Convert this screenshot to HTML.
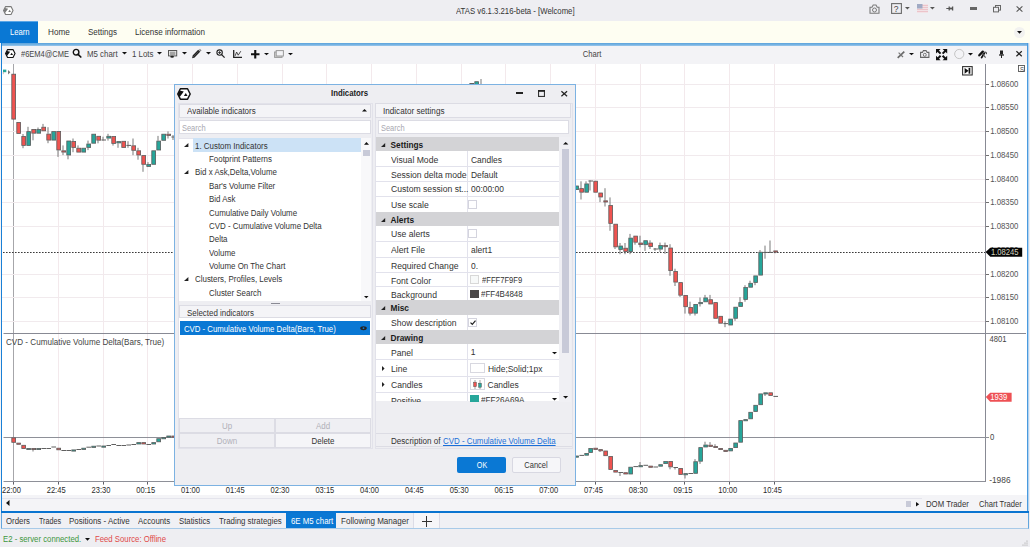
<!DOCTYPE html><html><head><meta charset="utf-8"><style>
*{margin:0;padding:0;box-sizing:border-box}
html,body{width:1030px;height:547px;overflow:hidden;background:#eeeef2;font-family:"Liberation Sans", sans-serif;position:relative}
.a{position:absolute}
.t{position:absolute;white-space:nowrap;line-height:1;font-family:"Liberation Sans", sans-serif}
svg{position:absolute;overflow:visible}
</style></head><body>
<div class="a" style="left:0px;top:0px;width:1030px;height:21px;background:#eeeef2;"></div>
<svg style="left:3.2px;top:5.8px" width="10.6" height="9.085714285714285" viewBox="0 0 14 12"><path d="M3.4 0.75 L10.6 0.75 L13.25 6 L10.6 11.25 L3.4 11.25 L0.75 6 Z" fill="#fff" stroke="#7a7a7a" stroke-width="1.5" stroke-linejoin="round"/><path d="M0.9 6 L2.7 2.6 L6.8 3.5 L3.3 8.3 L2.6 8.9 Z" fill="#7a7a7a"/><path d="M8.8 4.9 L10.6 8.0 L6.9 8.0 Z" fill="#7a7a7a"/></svg>
<div class="t" style="left:455.50px;top:7px;font-size:8.90px;color:#333;transform:scaleX(0.8740);transform-origin:left top;">ATAS v6.1.3.216-beta - [Welcome]</div>
<svg style="left:869px;top:4px" width="11" height="10" viewBox="0 0 11 10"><path d="M1 3.2 H3 L4.2 1 H7 L8.2 3.2 H10 V9.3 H1 Z" fill="none" stroke="#7a7a7a" stroke-width="1.1"/><circle cx="5.5" cy="6" r="2" fill="none" stroke="#7a7a7a" stroke-width="1"/></svg>
<svg style="left:891px;top:3px" width="11" height="11" viewBox="0 0 11 11"><rect x="0.6" y="0.6" width="9.8" height="9.8" fill="none" stroke="#6a6a6a" stroke-width="1.1"/></svg>
<div class="t" style="left:893.80px;top:5px;font-size:8.50px;color:#444;">?</div>
<svg style="left:905.0px;top:7.4px" width="4.8" height="2.6" viewBox="0 0 4.8 2.6"><path d="M0 0H4.8L2.4 2.6Z" fill="#555"/></svg>
<svg style="left:917px;top:4px" width="11" height="9" viewBox="0 0 11 9"><rect width="11" height="9" fill="#f2e2e6"/><rect y="1" width="11" height="1" fill="#ecc4ca"/><rect y="3" width="11" height="1" fill="#ecc4ca"/><rect y="5" width="11" height="1" fill="#ecc4ca"/><rect y="7" width="11" height="1" fill="#ecc4ca"/><rect width="5.5" height="4.5" fill="#a0aac4"/></svg>
<svg style="left:930.4px;top:7.4px" width="4.8" height="2.6" viewBox="0 0 4.8 2.6"><path d="M0 0H4.8L2.4 2.6Z" fill="#555"/></svg>
<svg style="left:946px;top:6px" width="8" height="5" viewBox="0 0 8 5"><path d="M0.3 2.5 H7" stroke="#555" stroke-width="1"/><path d="M3.2 0.6 V4.4 M6.6 0.4 V4.6" stroke="#555" stroke-width="1.3"/><rect x="3.2" y="1.6" width="3.4" height="1.8" fill="#555"/></svg>
<div class="a" style="left:970.2px;top:7.4px;width:7px;height:2.2px;background:#666;"></div>
<svg style="left:992.5px;top:5px" width="8" height="7" viewBox="0 0 8 7"><rect x="2.5" y="0.5" width="5" height="4.6" fill="none" stroke="#666" stroke-width="1"/><rect x="0.5" y="2.3" width="5" height="4.6" fill="#eeeef2" stroke="#666" stroke-width="1"/></svg>
<svg style="left:1015.5px;top:5.8px" width="7" height="6" viewBox="0 0 7 6"><path d="M0.6 0.3 L6.4 5.7 M6.4 0.3 L0.6 5.7" stroke="#555" stroke-width="1.1"/></svg>
<div class="a" style="left:0px;top:21px;width:1030px;height:22px;background:#fefef2;"></div>
<div class="a" style="left:0px;top:21px;width:38px;height:22px;background:#0a78d4;"></div>
<div class="a" style="left:0px;top:21px;width:38px;height:1px;background:#5aa6e6;"></div>
<div class="t" style="left:9.60px;top:28px;font-size:8.50px;color:#fff;transform:scaleX(0.9015);transform-origin:left top;">Learn</div>
<div class="t" style="left:47.60px;top:28px;font-size:8.50px;color:#333;transform:scaleX(0.9610);transform-origin:left top;">Home</div>
<div class="t" style="left:87.80px;top:28px;font-size:8.50px;color:#333;transform:scaleX(0.9408);transform-origin:left top;">Settings</div>
<div class="t" style="left:135.00px;top:28px;font-size:8.50px;color:#333;transform:scaleX(0.9497);transform-origin:left top;">License information</div>
<div class="a" style="left:1013.5px;top:26.5px;width:11px;height:11px;background:#f2f2f0;border-radius:50%"></div>
<svg style="left:1016.5px;top:31px" width="5" height="2.8" viewBox="0 0 5 2.8"><path d="M0 0H5L2.5 2.8Z" fill="#111"/></svg>
<div class="a" style="left:0px;top:43px;width:1030px;height:470px;background:#fff;"></div>
<div class="a" style="left:0px;top:43px;width:1px;height:470px;background:#f4f4f6;"></div>
<div class="a" style="left:1px;top:43px;width:1028px;height:1px;background:#64a8de;"></div>
<div class="a" style="left:1px;top:44px;width:1028px;height:1px;background:#74b2e2;"></div>
<div class="a" style="left:1px;top:45px;width:1028px;height:1px;background:#8ec0e8;"></div>
<div class="a" style="left:1px;top:43px;width:1px;height:470px;background:#1a80d6;"></div>
<div class="a" style="left:1027px;top:43px;width:1px;height:470px;background:#4a9ade;"></div>
<div class="a" style="left:1028px;top:43px;width:1px;height:470px;background:#b4d4f0;"></div>
<div class="a" style="left:1029px;top:43px;width:1px;height:470px;background:#eeeef2;"></div>
<div class="a" style="left:1px;top:511px;width:1028px;height:2px;background:#0a74d0;"></div>
<div class="a" style="left:2px;top:46px;width:1025px;height:18px;background:#f3f3f6;"></div>
<svg style="left:4.9px;top:49px" width="10.6" height="9.085714285714285" viewBox="0 0 14 12"><path d="M3.4 0.75 L10.6 0.75 L13.25 6 L10.6 11.25 L3.4 11.25 L0.75 6 Z" fill="#fff" stroke="#111" stroke-width="1.5" stroke-linejoin="round"/><path d="M0.9 6 L2.7 2.6 L6.8 3.5 L3.3 8.3 L2.6 8.9 Z" fill="#111"/><path d="M8.8 4.9 L10.6 8.0 L6.9 8.0 Z" fill="#111"/></svg>
<div class="t" style="left:21.00px;top:50px;font-size:8.50px;color:#444;transform:scaleX(0.8815);transform-origin:left top;">#6EM4@CME</div>
<svg style="left:72px;top:48px" width="10" height="10" viewBox="0 0 10 10"><circle cx="4.1" cy="4.2" r="2.8" fill="none" stroke="#111" stroke-width="1.4"/><path d="M6.1 6.3 L8.8 9" stroke="#111" stroke-width="1.7" stroke-linecap="round"/></svg>
<div class="t" style="left:86.60px;top:50px;font-size:8.50px;color:#444;transform:scaleX(0.9253);transform-origin:left top;">M5 chart</div>
<svg style="left:122.3px;top:52.2px" width="5" height="2.5" viewBox="0 0 5 2.5"><path d="M0 0H5L2.5 2.5Z" fill="#111"/></svg>
<div class="t" style="left:132.00px;top:50px;font-size:8.50px;color:#444;transform:scaleX(0.9282);transform-origin:left top;">1 Lots</div>
<svg style="left:157.2px;top:52.2px" width="5" height="2.5" viewBox="0 0 5 2.5"><path d="M0 0H5L2.5 2.5Z" fill="#111"/></svg>
<svg style="left:168px;top:50px" width="9" height="8" viewBox="0 0 9 8"><rect x="0.5" y="0.5" width="8.2" height="5.4" fill="#f0f0f0" stroke="#555" stroke-width="1"/><rect x="1.8" y="1.6" width="5.6" height="3.4" fill="#a4a4a4"/><ellipse cx="4.1" cy="6.7" rx="1.9" ry="1" fill="#222"/></svg>
<svg style="left:181.5px;top:52.2px" width="5" height="2.5" viewBox="0 0 5 2.5"><path d="M0 0H5L2.5 2.5Z" fill="#111"/></svg>
<svg style="left:192px;top:49px" width="9.5" height="9.5" viewBox="0 0 9.5 9.5"><path d="M1.6 7.4 L7.2 1.8" stroke="#222" stroke-width="2.8"/><path d="M0.1 9.2 L0.7 6.4 L2.8 8.5 Z" fill="#222"/><path d="M7.4 0.4 L9 2" stroke="#888" stroke-width="1.6"/><path d="M2.2 6.8 L6.6 2.4" stroke="#ddd" stroke-width="0.5" stroke-dasharray="0.6 0.9"/></svg>
<svg style="left:205.7px;top:52.2px" width="5" height="2.5" viewBox="0 0 5 2.5"><path d="M0 0H5L2.5 2.5Z" fill="#111"/></svg>
<svg style="left:216px;top:49px" width="9.5" height="9.5" viewBox="0 0 9.5 9.5"><circle cx="3.6" cy="3.6" r="2.7" fill="none" stroke="#222" stroke-width="1.1"/><path d="M3.6 2.2 V5 M2.2 3.6 H5" stroke="#222" stroke-width="0.9"/><path d="M5.6 5.6 L8.6 8.6" stroke="#222" stroke-width="1.3"/></svg>
<svg style="left:233px;top:50px" width="9" height="8" viewBox="0 0 9 8"><path d="M0.7 0 V7.3 H9" fill="none" stroke="#222" stroke-width="1.3"/><path d="M2.2 5.8 L3.6 2 L5.2 5.2 L7.8 1.2" fill="none" stroke="#333" stroke-width="0.9"/></svg>
<svg style="left:251px;top:49.5px" width="8.5" height="8.5" viewBox="0 0 8.5 8.5"><path d="M4.25 0 V8.5 M0 4.25 H8.5" stroke="#111" stroke-width="2.1"/></svg>
<svg style="left:264.1px;top:53px" width="5" height="2.2" viewBox="0 0 5 2.2"><path d="M0 0H5L2.5 2.2Z" fill="#111"/></svg>
<svg style="left:274px;top:50px" width="10" height="8" viewBox="0 0 10 8"><rect x="0.6" y="2" width="7.4" height="5.4" fill="#d8d8d8" stroke="#999" stroke-width="1"/><rect x="2.2" y="0.6" width="7.2" height="5.4" fill="#f3f3f6" stroke="#999" stroke-width="1"/></svg>
<svg style="left:288.2px;top:53px" width="5" height="2.2" viewBox="0 0 5 2.2"><path d="M0 0H5L2.5 2.2Z" fill="#111"/></svg>
<div class="t" style="left:592.30px;top:50px;font-size:8.50px;color:#444;transform:translateX(-50%) scaleX(0.8997);transform-origin:center top;">Chart</div>
<svg style="left:896.5px;top:50.5px" width="8" height="7.5" viewBox="0 0 8 7.5"><path d="M0.7 6.8 L7.3 0.6" stroke="#6a6a6a" stroke-width="1.7"/><path d="M1.6 1.6 L6 6" stroke="#777" stroke-width="1.2"/></svg>
<svg style="left:909.4px;top:52.9px" width="5" height="2.3" viewBox="0 0 5 2.3"><path d="M0 0H5L2.5 2.3Z" fill="#111"/></svg>
<svg style="left:920px;top:50px" width="9.5" height="8" viewBox="0 0 9.5 8"><path d="M0.6 2.4 H2.4 L3.4 0.6 H6.1 L7.1 2.4 H8.9 V7.4 H0.6 Z" fill="none" stroke="#666" stroke-width="1.1"/><circle cx="4.75" cy="4.8" r="1.5" fill="none" stroke="#666" stroke-width="0.9"/></svg>
<svg style="left:935.9px;top:48.6px" width="11.2" height="11.3" viewBox="0 0 11.2 11.3"><path d="M1.2 1.2 L4.6 4.6 M10 1.2 L6.6 4.6 M1.2 10.1 L4.6 6.7 M10 10.1 L6.6 6.7" stroke="#111" stroke-width="2"/><path d="M0 0 H4.6 L0 4.6 Z M11.2 0 H6.6 L11.2 4.6 Z M0 11.3 H4.6 L0 6.7 Z M11.2 11.3 H6.6 L11.2 6.7 Z" fill="#111"/></svg>
<svg style="left:953.5px;top:49px" width="10.5" height="10" viewBox="0 0 10.5 10"><circle cx="5.25" cy="5" r="4.6" fill="none" stroke="#c0c0c0" stroke-width="0.9"/></svg>
<svg style="left:967.9px;top:53px" width="5" height="2.6" viewBox="0 0 5 2.6"><path d="M0 0H5L2.5 2.6Z" fill="#111"/></svg>
<svg style="left:978px;top:50px" width="10" height="9" viewBox="0 0 10 9"><path d="M1.3 5.3 L4.8 1.6" stroke="#111" stroke-width="2.3" stroke-linecap="round"/><path d="M6.3 3.2 L3.6 7.6" stroke="#111" stroke-width="1.8" stroke-linecap="round"/><path d="M4.6 3.8 L7.6 7.6" stroke="#555" stroke-width="1.1"/><path d="M6.2 2.2 Q8.9 1.6 8.4 4.2" fill="none" stroke="#444" stroke-width="1.1"/></svg>
<svg style="left:999px;top:50px" width="5" height="8" viewBox="0 0 5 8"><path d="M1 0.5 H4 V4.5 H1 Z" fill="#222"/><path d="M0 5 H5" stroke="#222" stroke-width="1.2"/><path d="M2.5 5 V8" stroke="#222" stroke-width="1"/></svg>
<svg style="left:1015.6px;top:51px" width="6.2" height="5.6" viewBox="0 0 6.2 5.6"><path d="M0.4 0.3 L5.8 5.3 M5.8 0.3 L0.4 5.3" stroke="#222" stroke-width="1.2"/></svg>
<div class="a" style="left:2px;top:495px;width:1025px;height:16px;background:#f4f4f7;"></div>
<div class="a" style="left:2px;top:497.5px;width:920px;height:1px;background:#e4e4ec;"></div>
<svg style="left:6px;top:500px" width="4" height="6" viewBox="0 0 4 6"><path d="M3.5 0 V6 L0 3 Z" fill="#111"/></svg>
<div class="a" style="left:905.6px;top:501px;width:5.4px;height:6.4px;background:#c8cad8;"></div>
<svg style="left:915.5px;top:501.8px" width="3.2" height="4.4" viewBox="0 0 3.2 4.4"><path d="M0 0 V4.4 L3.2 2.2 Z" fill="#111"/></svg>
<div class="t" style="left:926.00px;top:500px;font-size:8.50px;color:#333;transform:scaleX(0.9152);transform-origin:left top;">DOM Trader</div>
<div class="t" style="left:979.00px;top:500px;font-size:8.50px;color:#333;transform:scaleX(0.8969);transform-origin:left top;">Chart Trader</div>
<svg width="1030" height="547" style="position:absolute;left:0;top:0">
<line x1="13.5" y1="64" x2="13.5" y2="481" stroke="#a6a6aa" stroke-width="1"/>
<line x1="13.5" y1="481" x2="13.5" y2="484.6" stroke="#606068" stroke-width="1"/>
<line x1="58.5" y1="64" x2="58.5" y2="481" stroke="#f3e9ec" stroke-width="1"/>
<line x1="58.5" y1="481" x2="58.5" y2="484.6" stroke="#606068" stroke-width="1"/>
<line x1="103.5" y1="64" x2="103.5" y2="481" stroke="#f3e9ec" stroke-width="1"/>
<line x1="103.5" y1="481" x2="103.5" y2="484.6" stroke="#606068" stroke-width="1"/>
<line x1="147.5" y1="64" x2="147.5" y2="481" stroke="#f3e9ec" stroke-width="1"/>
<line x1="147.5" y1="481" x2="147.5" y2="484.6" stroke="#606068" stroke-width="1"/>
<line x1="192.5" y1="64" x2="192.5" y2="481" stroke="#f3e9ec" stroke-width="1"/>
<line x1="192.5" y1="481" x2="192.5" y2="484.6" stroke="#606068" stroke-width="1"/>
<line x1="237.5" y1="64" x2="237.5" y2="481" stroke="#f3e9ec" stroke-width="1"/>
<line x1="237.5" y1="481" x2="237.5" y2="484.6" stroke="#606068" stroke-width="1"/>
<line x1="282.5" y1="64" x2="282.5" y2="481" stroke="#f3e9ec" stroke-width="1"/>
<line x1="282.5" y1="481" x2="282.5" y2="484.6" stroke="#606068" stroke-width="1"/>
<line x1="326.5" y1="64" x2="326.5" y2="481" stroke="#f3e9ec" stroke-width="1"/>
<line x1="326.5" y1="481" x2="326.5" y2="484.6" stroke="#606068" stroke-width="1"/>
<line x1="371.5" y1="64" x2="371.5" y2="481" stroke="#f3e9ec" stroke-width="1"/>
<line x1="371.5" y1="481" x2="371.5" y2="484.6" stroke="#606068" stroke-width="1"/>
<line x1="416.5" y1="64" x2="416.5" y2="481" stroke="#f3e9ec" stroke-width="1"/>
<line x1="416.5" y1="481" x2="416.5" y2="484.6" stroke="#606068" stroke-width="1"/>
<line x1="461.5" y1="64" x2="461.5" y2="481" stroke="#f3e9ec" stroke-width="1"/>
<line x1="461.5" y1="481" x2="461.5" y2="484.6" stroke="#606068" stroke-width="1"/>
<line x1="505.5" y1="64" x2="505.5" y2="481" stroke="#f3e9ec" stroke-width="1"/>
<line x1="505.5" y1="481" x2="505.5" y2="484.6" stroke="#606068" stroke-width="1"/>
<line x1="550.5" y1="64" x2="550.5" y2="481" stroke="#f3e9ec" stroke-width="1"/>
<line x1="550.5" y1="481" x2="550.5" y2="484.6" stroke="#606068" stroke-width="1"/>
<line x1="595.5" y1="64" x2="595.5" y2="481" stroke="#f3e9ec" stroke-width="1"/>
<line x1="595.5" y1="481" x2="595.5" y2="484.6" stroke="#606068" stroke-width="1"/>
<line x1="640.5" y1="64" x2="640.5" y2="481" stroke="#f3e9ec" stroke-width="1"/>
<line x1="640.5" y1="481" x2="640.5" y2="484.6" stroke="#606068" stroke-width="1"/>
<line x1="684.5" y1="64" x2="684.5" y2="481" stroke="#f3e9ec" stroke-width="1"/>
<line x1="684.5" y1="481" x2="684.5" y2="484.6" stroke="#606068" stroke-width="1"/>
<line x1="729.5" y1="64" x2="729.5" y2="481" stroke="#f3e9ec" stroke-width="1"/>
<line x1="729.5" y1="481" x2="729.5" y2="484.6" stroke="#606068" stroke-width="1"/>
<line x1="774.5" y1="64" x2="774.5" y2="481" stroke="#f3e9ec" stroke-width="1"/>
<line x1="774.5" y1="481" x2="774.5" y2="484.6" stroke="#606068" stroke-width="1"/>
<line x1="2" y1="84.5" x2="985" y2="84.5" stroke="#f1eaed" stroke-width="1"/>
<line x1="985" y1="84.5" x2="989" y2="84.5" stroke="#707070" stroke-width="1"/>
<line x1="2" y1="107.5" x2="985" y2="107.5" stroke="#f1eaed" stroke-width="1"/>
<line x1="985" y1="107.5" x2="989" y2="107.5" stroke="#707070" stroke-width="1"/>
<line x1="2" y1="131.5" x2="985" y2="131.5" stroke="#f1eaed" stroke-width="1"/>
<line x1="985" y1="131.5" x2="989" y2="131.5" stroke="#707070" stroke-width="1"/>
<line x1="2" y1="155.5" x2="985" y2="155.5" stroke="#f1eaed" stroke-width="1"/>
<line x1="985" y1="155.5" x2="989" y2="155.5" stroke="#707070" stroke-width="1"/>
<line x1="2" y1="179.5" x2="985" y2="179.5" stroke="#f1eaed" stroke-width="1"/>
<line x1="985" y1="179.5" x2="989" y2="179.5" stroke="#707070" stroke-width="1"/>
<line x1="2" y1="202.5" x2="985" y2="202.5" stroke="#f1eaed" stroke-width="1"/>
<line x1="985" y1="202.5" x2="989" y2="202.5" stroke="#707070" stroke-width="1"/>
<line x1="2" y1="226.5" x2="985" y2="226.5" stroke="#f1eaed" stroke-width="1"/>
<line x1="985" y1="226.5" x2="989" y2="226.5" stroke="#707070" stroke-width="1"/>
<line x1="2" y1="274.5" x2="985" y2="274.5" stroke="#f1eaed" stroke-width="1"/>
<line x1="985" y1="274.5" x2="989" y2="274.5" stroke="#707070" stroke-width="1"/>
<line x1="2" y1="297.5" x2="985" y2="297.5" stroke="#f1eaed" stroke-width="1"/>
<line x1="985" y1="297.5" x2="989" y2="297.5" stroke="#707070" stroke-width="1"/>
<line x1="2" y1="321.5" x2="985" y2="321.5" stroke="#f1eaed" stroke-width="1"/>
<line x1="985" y1="321.5" x2="989" y2="321.5" stroke="#707070" stroke-width="1"/>
<line x1="3" y1="252.5" x2="985" y2="252.5" stroke="#3a3a3a" stroke-width="1" stroke-dasharray="1.6 1.4"/>
<line x1="3.5" y1="333.5" x2="1026" y2="333.5" stroke="#888a94" stroke-width="1"/>
<line x1="985.5" y1="64" x2="985.5" y2="482" stroke="#888a94" stroke-width="1"/>
<line x1="3.5" y1="437.5" x2="989" y2="437.5" stroke="#8e9098" stroke-width="1"/>
<line x1="3.5" y1="481.5" x2="985.5" y2="481.5" stroke="#8e9098" stroke-width="1"/>
<rect x="11.8" y="74.2" width="3.8" height="44.9" fill="#ef5350" stroke="#5b5b5b" stroke-width="0.8"/>
<rect x="16.8" y="122.4" width="3.8" height="11.1" fill="#ef5350" stroke="#5b5b5b" stroke-width="0.8"/>
<rect x="22.5" y="134.0" width="1" height="2.0" fill="#7a7a7a"/>
<rect x="22.5" y="145.8" width="1" height="2.4" fill="#7a7a7a"/>
<rect x="21.8" y="136.4" width="3.8" height="9.0" fill="#ef5350" stroke="#5b5b5b" stroke-width="0.8"/>
<rect x="27.5" y="126.8" width="1" height="4.4" fill="#7a7a7a"/>
<rect x="26.8" y="131.6" width="3.8" height="13.8" fill="#26a69a" stroke="#5b5b5b" stroke-width="0.8"/>
<rect x="32.5" y="133.6" width="1" height="6.7" fill="#7a7a7a"/>
<rect x="31.8" y="129.4" width="3.8" height="3.8" fill="#ef5350" stroke="#5b5b5b" stroke-width="0.8"/>
<rect x="37.5" y="127.5" width="1" height="1.5" fill="#7a7a7a"/>
<rect x="36.8" y="129.4" width="3.8" height="3.8" fill="#26a69a" stroke="#5b5b5b" stroke-width="0.8"/>
<rect x="42.5" y="123.9" width="1" height="2.9" fill="#7a7a7a"/>
<rect x="41.8" y="127.2" width="3.8" height="3.6" fill="#ef5350" stroke="#5b5b5b" stroke-width="0.8"/>
<rect x="47.5" y="127.2" width="1" height="6.5" fill="#7a7a7a"/>
<rect x="47.5" y="140.5" width="1" height="2.7" fill="#7a7a7a"/>
<rect x="46.8" y="134.1" width="3.8" height="6.0" fill="#ef5350" stroke="#5b5b5b" stroke-width="0.8"/>
<rect x="51.8" y="131.6" width="3.8" height="8.5" fill="#26a69a" stroke="#5b5b5b" stroke-width="0.8"/>
<rect x="57.5" y="150.4" width="1" height="6.5" fill="#7a7a7a"/>
<rect x="56.8" y="131.5" width="3.8" height="18.5" fill="#ef5350" stroke="#5b5b5b" stroke-width="0.8"/>
<rect x="62.5" y="145.4" width="1" height="5.0" fill="#7a7a7a"/>
<rect x="62.5" y="152.5" width="1" height="2.6" fill="#7a7a7a"/>
<rect x="61.8" y="150.8" width="3.8" height="1.3" fill="#ef5350" stroke="#5b5b5b" stroke-width="0.8"/>
<rect x="67.5" y="155.4" width="1" height="3.9" fill="#7a7a7a"/>
<rect x="66.8" y="141.0" width="3.8" height="14.0" fill="#26a69a" stroke="#5b5b5b" stroke-width="0.8"/>
<rect x="72.5" y="138.5" width="1" height="2.6" fill="#7a7a7a"/>
<rect x="72.5" y="147.8" width="1" height="4.4" fill="#7a7a7a"/>
<rect x="71.8" y="141.5" width="3.8" height="5.9" fill="#ef5350" stroke="#5b5b5b" stroke-width="0.8"/>
<rect x="77.5" y="145.4" width="1" height="2.4" fill="#7a7a7a"/>
<rect x="76.8" y="148.2" width="3.8" height="3.9" fill="#ef5350" stroke="#5b5b5b" stroke-width="0.8"/>
<rect x="81.8" y="148.2" width="3.8" height="3.9" fill="#26a69a" stroke="#5b5b5b" stroke-width="0.8"/>
<rect x="87.5" y="140.6" width="1" height="3.0" fill="#7a7a7a"/>
<rect x="87.5" y="147.8" width="1" height="2.3" fill="#7a7a7a"/>
<rect x="86.8" y="144.0" width="3.8" height="3.4" fill="#26a69a" stroke="#5b5b5b" stroke-width="0.8"/>
<rect x="91.8" y="134.2" width="3.8" height="9.0" fill="#26a69a" stroke="#5b5b5b" stroke-width="0.8"/>
<rect x="97.5" y="140.6" width="1" height="2.7" fill="#7a7a7a"/>
<rect x="96.8" y="136.3" width="3.8" height="3.9" fill="#ef5350" stroke="#5b5b5b" stroke-width="0.8"/>
<rect x="102.5" y="136.7" width="1" height="3.3" fill="#7a7a7a"/>
<rect x="102.5" y="140.0" width="1" height="0.6" fill="#7a7a7a"/>
<rect x="101.4" y="139.5" width="4.6" height="1" fill="#606060"/>
<rect x="107.5" y="133.8" width="1" height="2.1" fill="#7a7a7a"/>
<rect x="107.5" y="138.5" width="1" height="2.1" fill="#7a7a7a"/>
<rect x="106.8" y="136.3" width="3.8" height="1.8" fill="#26a69a" stroke="#5b5b5b" stroke-width="0.8"/>
<rect x="112.5" y="143.8" width="1" height="1.8" fill="#7a7a7a"/>
<rect x="111.8" y="136.5" width="3.8" height="6.9" fill="#ef5350" stroke="#5b5b5b" stroke-width="0.8"/>
<rect x="117.5" y="143.3" width="1" height="4.5" fill="#7a7a7a"/>
<rect x="116.8" y="141.6" width="3.8" height="1.3" fill="#26a69a" stroke="#5b5b5b" stroke-width="0.8"/>
<rect x="121.8" y="141.3" width="3.8" height="6.1" fill="#ef5350" stroke="#5b5b5b" stroke-width="0.8"/>
<rect x="127.5" y="141.2" width="1" height="4.2" fill="#7a7a7a"/>
<rect x="127.5" y="145.4" width="1" height="2.4" fill="#7a7a7a"/>
<rect x="126.4" y="144.9" width="4.6" height="1" fill="#606060"/>
<rect x="132.5" y="138.5" width="1" height="6.9" fill="#7a7a7a"/>
<rect x="132.5" y="150.7" width="1" height="4.5" fill="#7a7a7a"/>
<rect x="131.8" y="145.8" width="3.8" height="4.5" fill="#ef5350" stroke="#5b5b5b" stroke-width="0.8"/>
<rect x="137.5" y="147.8" width="1" height="2.6" fill="#7a7a7a"/>
<rect x="137.5" y="155.4" width="1" height="4.3" fill="#7a7a7a"/>
<rect x="136.8" y="150.8" width="3.8" height="4.2" fill="#ef5350" stroke="#5b5b5b" stroke-width="0.8"/>
<rect x="142.5" y="164.7" width="1" height="7.1" fill="#7a7a7a"/>
<rect x="141.8" y="155.6" width="3.8" height="8.7" fill="#ef5350" stroke="#5b5b5b" stroke-width="0.8"/>
<rect x="147.5" y="162.1" width="1" height="2.0" fill="#7a7a7a"/>
<rect x="146.8" y="164.5" width="3.8" height="1.9" fill="#26a69a" stroke="#5b5b5b" stroke-width="0.8"/>
<rect x="151.8" y="150.8" width="3.8" height="13.5" fill="#26a69a" stroke="#5b5b5b" stroke-width="0.8"/>
<rect x="157.5" y="135.9" width="1" height="4.8" fill="#7a7a7a"/>
<rect x="156.8" y="141.1" width="3.8" height="8.9" fill="#26a69a" stroke="#5b5b5b" stroke-width="0.8"/>
<rect x="161.8" y="134.2" width="3.8" height="6.1" fill="#26a69a" stroke="#5b5b5b" stroke-width="0.8"/>
<rect x="167.5" y="131.4" width="1" height="2.4" fill="#7a7a7a"/>
<rect x="167.5" y="135.9" width="1" height="2.6" fill="#7a7a7a"/>
<rect x="166.8" y="134.2" width="3.8" height="1.3" fill="#ef5350" stroke="#5b5b5b" stroke-width="0.8"/>
<rect x="172.5" y="135.0" width="1" height="2.0" fill="#7a7a7a"/>
<rect x="172.5" y="137.0" width="1" height="3.0" fill="#7a7a7a"/>
<rect x="171.4" y="136.5" width="4.6" height="1" fill="#606060"/>
<rect x="469.4" y="83.0" width="4.6" height="1" fill="#606060"/>
<rect x="474.8" y="81.7" width="3.8" height="7.9" fill="#26a69a" stroke="#5b5b5b" stroke-width="0.8"/>
<rect x="480.5" y="79.0" width="1" height="7.0" fill="#7a7a7a"/>
<rect x="480.5" y="86.0" width="1" height="4.0" fill="#7a7a7a"/>
<rect x="479.4" y="85.5" width="4.6" height="1" fill="#606060"/>
<rect x="574.8" y="186.0" width="3.8" height="3.6" fill="#26a69a" stroke="#5b5b5b" stroke-width="0.8"/>
<rect x="580.5" y="181.3" width="1" height="6.9" fill="#7a7a7a"/>
<rect x="580.5" y="192.6" width="1" height="6.9" fill="#7a7a7a"/>
<rect x="579.8" y="188.6" width="3.8" height="3.6" fill="#ef5350" stroke="#5b5b5b" stroke-width="0.8"/>
<rect x="585.5" y="181.3" width="1" height="2.2" fill="#7a7a7a"/>
<rect x="584.8" y="183.9" width="3.8" height="8.3" fill="#26a69a" stroke="#5b5b5b" stroke-width="0.8"/>
<rect x="589.5" y="180.4" width="1" height="0.6" fill="#7a7a7a"/>
<rect x="589.5" y="181.0" width="1" height="9.5" fill="#7a7a7a"/>
<rect x="588.4" y="180.5" width="4.6" height="1" fill="#606060"/>
<rect x="593.8" y="181.2" width="3.8" height="11.0" fill="#ef5350" stroke="#5b5b5b" stroke-width="0.8"/>
<rect x="599.5" y="197.4" width="1" height="4.7" fill="#7a7a7a"/>
<rect x="598.8" y="193.0" width="3.8" height="4.0" fill="#ef5350" stroke="#5b5b5b" stroke-width="0.8"/>
<rect x="604.5" y="188.2" width="1" height="12.2" fill="#7a7a7a"/>
<rect x="604.5" y="202.1" width="1" height="4.4" fill="#7a7a7a"/>
<rect x="603.8" y="200.8" width="3.8" height="1.2" fill="#ef5350" stroke="#5b5b5b" stroke-width="0.8"/>
<rect x="609.5" y="197.4" width="1" height="7.7" fill="#7a7a7a"/>
<rect x="609.5" y="223.8" width="1" height="7.0" fill="#7a7a7a"/>
<rect x="608.8" y="205.5" width="3.8" height="17.9" fill="#ef5350" stroke="#5b5b5b" stroke-width="0.8"/>
<rect x="614.5" y="247.3" width="1" height="1.7" fill="#7a7a7a"/>
<rect x="613.8" y="224.2" width="3.8" height="22.7" fill="#ef5350" stroke="#5b5b5b" stroke-width="0.8"/>
<rect x="619.5" y="243.0" width="1" height="2.6" fill="#7a7a7a"/>
<rect x="619.5" y="249.9" width="1" height="4.3" fill="#7a7a7a"/>
<rect x="618.8" y="246.0" width="3.8" height="3.5" fill="#26a69a" stroke="#5b5b5b" stroke-width="0.8"/>
<rect x="624.5" y="243.0" width="1" height="4.8" fill="#7a7a7a"/>
<rect x="624.5" y="252.0" width="1" height="2.2" fill="#7a7a7a"/>
<rect x="623.8" y="248.2" width="3.8" height="3.4" fill="#ef5350" stroke="#5b5b5b" stroke-width="0.8"/>
<rect x="629.5" y="233.9" width="1" height="3.8" fill="#7a7a7a"/>
<rect x="629.5" y="252.0" width="1" height="2.2" fill="#7a7a7a"/>
<rect x="628.8" y="238.1" width="3.8" height="13.5" fill="#26a69a" stroke="#5b5b5b" stroke-width="0.8"/>
<rect x="634.5" y="242.6" width="1" height="2.1" fill="#7a7a7a"/>
<rect x="633.8" y="236.1" width="3.8" height="6.1" fill="#ef5350" stroke="#5b5b5b" stroke-width="0.8"/>
<rect x="639.5" y="235.7" width="1" height="6.9" fill="#7a7a7a"/>
<rect x="639.5" y="245.0" width="1" height="2.3" fill="#7a7a7a"/>
<rect x="638.8" y="243.0" width="3.8" height="1.6" fill="#ef5350" stroke="#5b5b5b" stroke-width="0.8"/>
<rect x="644.5" y="245.1" width="1" height="5.8" fill="#7a7a7a"/>
<rect x="643.8" y="240.7" width="3.8" height="4.0" fill="#26a69a" stroke="#5b5b5b" stroke-width="0.8"/>
<rect x="649.5" y="240.3" width="1" height="2.3" fill="#7a7a7a"/>
<rect x="649.5" y="247.0" width="1" height="2.0" fill="#7a7a7a"/>
<rect x="648.8" y="243.0" width="3.8" height="3.6" fill="#ef5350" stroke="#5b5b5b" stroke-width="0.8"/>
<rect x="654.5" y="248.0" width="1" height="1.0" fill="#7a7a7a"/>
<rect x="654.5" y="249.0" width="1" height="1.9" fill="#7a7a7a"/>
<rect x="653.4" y="248.5" width="4.6" height="1" fill="#606060"/>
<rect x="659.5" y="242.6" width="1" height="2.5" fill="#7a7a7a"/>
<rect x="659.5" y="249.5" width="1" height="2.4" fill="#7a7a7a"/>
<rect x="658.8" y="245.5" width="3.8" height="3.6" fill="#26a69a" stroke="#5b5b5b" stroke-width="0.8"/>
<rect x="664.5" y="242.6" width="1" height="2.5" fill="#7a7a7a"/>
<rect x="664.5" y="247.0" width="1" height="6.8" fill="#7a7a7a"/>
<rect x="663.8" y="245.5" width="3.8" height="1.2" fill="#ef5350" stroke="#5b5b5b" stroke-width="0.8"/>
<rect x="669.5" y="244.2" width="1" height="3.4" fill="#7a7a7a"/>
<rect x="669.5" y="271.0" width="1" height="4.8" fill="#7a7a7a"/>
<rect x="668.8" y="248.0" width="3.8" height="22.6" fill="#ef5350" stroke="#5b5b5b" stroke-width="0.8"/>
<rect x="674.5" y="268.7" width="1" height="2.3" fill="#7a7a7a"/>
<rect x="674.5" y="282.5" width="1" height="3.5" fill="#7a7a7a"/>
<rect x="673.8" y="271.4" width="3.8" height="10.7" fill="#ef5350" stroke="#5b5b5b" stroke-width="0.8"/>
<rect x="679.5" y="295.6" width="1" height="1.3" fill="#7a7a7a"/>
<rect x="678.8" y="282.6" width="3.8" height="12.6" fill="#ef5350" stroke="#5b5b5b" stroke-width="0.8"/>
<rect x="684.5" y="307.1" width="1" height="6.5" fill="#7a7a7a"/>
<rect x="683.8" y="295.4" width="3.8" height="11.3" fill="#ef5350" stroke="#5b5b5b" stroke-width="0.8"/>
<rect x="689.5" y="301.7" width="1" height="5.4" fill="#7a7a7a"/>
<rect x="689.5" y="313.6" width="1" height="1.9" fill="#7a7a7a"/>
<rect x="688.8" y="307.5" width="3.8" height="5.7" fill="#ef5350" stroke="#5b5b5b" stroke-width="0.8"/>
<rect x="694.5" y="313.6" width="1" height="1.9" fill="#7a7a7a"/>
<rect x="693.8" y="304.4" width="3.8" height="8.8" fill="#26a69a" stroke="#5b5b5b" stroke-width="0.8"/>
<rect x="699.5" y="297.5" width="1" height="4.6" fill="#7a7a7a"/>
<rect x="699.5" y="304.0" width="1" height="2.5" fill="#7a7a7a"/>
<rect x="698.8" y="302.5" width="3.8" height="1.2" fill="#26a69a" stroke="#5b5b5b" stroke-width="0.8"/>
<rect x="704.5" y="294.9" width="1" height="2.6" fill="#7a7a7a"/>
<rect x="703.8" y="297.9" width="3.8" height="3.9" fill="#26a69a" stroke="#5b5b5b" stroke-width="0.8"/>
<rect x="709.5" y="294.9" width="1" height="4.4" fill="#7a7a7a"/>
<rect x="708.8" y="299.7" width="3.8" height="4.3" fill="#ef5350" stroke="#5b5b5b" stroke-width="0.8"/>
<rect x="713.8" y="302.6" width="3.8" height="15.7" fill="#ef5350" stroke="#5b5b5b" stroke-width="0.8"/>
<rect x="718.8" y="316.3" width="3.8" height="6.9" fill="#ef5350" stroke="#5b5b5b" stroke-width="0.8"/>
<rect x="724.5" y="321.2" width="1" height="2.4" fill="#7a7a7a"/>
<rect x="724.5" y="323.6" width="1" height="3.6" fill="#7a7a7a"/>
<rect x="723.4" y="323.1" width="4.6" height="1" fill="#606060"/>
<rect x="728.8" y="319.1" width="3.8" height="5.9" fill="#26a69a" stroke="#5b5b5b" stroke-width="0.8"/>
<rect x="734.5" y="318.7" width="1" height="2.1" fill="#7a7a7a"/>
<rect x="733.8" y="307.2" width="3.8" height="11.1" fill="#26a69a" stroke="#5b5b5b" stroke-width="0.8"/>
<rect x="739.5" y="297.1" width="1" height="5.1" fill="#7a7a7a"/>
<rect x="738.8" y="302.6" width="3.8" height="3.8" fill="#26a69a" stroke="#5b5b5b" stroke-width="0.8"/>
<rect x="744.5" y="285.2" width="1" height="1.9" fill="#7a7a7a"/>
<rect x="744.5" y="299.8" width="1" height="1.9" fill="#7a7a7a"/>
<rect x="743.8" y="287.5" width="3.8" height="11.9" fill="#26a69a" stroke="#5b5b5b" stroke-width="0.8"/>
<rect x="749.5" y="280.7" width="1" height="2.2" fill="#7a7a7a"/>
<rect x="748.8" y="283.3" width="3.8" height="3.9" fill="#26a69a" stroke="#5b5b5b" stroke-width="0.8"/>
<rect x="754.5" y="282.9" width="1" height="2.3" fill="#7a7a7a"/>
<rect x="753.8" y="275.9" width="3.8" height="6.6" fill="#26a69a" stroke="#5b5b5b" stroke-width="0.8"/>
<rect x="759.5" y="250.0" width="1" height="1.8" fill="#7a7a7a"/>
<rect x="758.8" y="252.2" width="3.8" height="22.9" fill="#26a69a" stroke="#5b5b5b" stroke-width="0.8"/>
<rect x="764.5" y="245.6" width="1" height="6.8" fill="#7a7a7a"/>
<rect x="764.5" y="252.4" width="1" height="6.3" fill="#7a7a7a"/>
<rect x="763.4" y="251.9" width="4.6" height="1" fill="#606060"/>
<rect x="769.5" y="240.5" width="1" height="11.9" fill="#7a7a7a"/>
<rect x="769.5" y="252.4" width="1" height="0.0" fill="#7a7a7a"/>
<rect x="768.4" y="251.9" width="4.6" height="1" fill="#606060"/>
<rect x="774.5" y="252.4" width="1" height="0.9" fill="#7a7a7a"/>
<rect x="773.8" y="250.9" width="3.8" height="1.2" fill="#ef5350" stroke="#5b5b5b" stroke-width="0.8"/>
<rect x="11.8" y="437.9" width="3.8" height="4.4" fill="#ef5350" stroke="#5b5b5b" stroke-width="0.8"/>
<rect x="16.8" y="443.1" width="3.8" height="1.2" fill="#ef5350" stroke="#5b5b5b" stroke-width="0.8"/>
<rect x="21.8" y="445.3" width="3.8" height="3.3" fill="#ef5350" stroke="#5b5b5b" stroke-width="0.8"/>
<rect x="26.8" y="448.4" width="3.8" height="1.2" fill="#26a69a" stroke="#5b5b5b" stroke-width="0.8"/>
<rect x="32.5" y="449.0" width="1" height="2.5" fill="#7a7a7a"/>
<rect x="31.8" y="448.4" width="3.8" height="1.2" fill="#ef5350" stroke="#5b5b5b" stroke-width="0.8"/>
<rect x="36.8" y="448.4" width="3.8" height="1.2" fill="#26a69a" stroke="#5b5b5b" stroke-width="0.8"/>
<rect x="41.4" y="448.0" width="4.6" height="1" fill="#606060"/>
<rect x="46.4" y="448.0" width="4.6" height="1" fill="#606060"/>
<rect x="51.4" y="446.5" width="4.6" height="1" fill="#606060"/>
<rect x="56.8" y="448.2" width="3.8" height="1.6" fill="#ef5350" stroke="#5b5b5b" stroke-width="0.8"/>
<rect x="61.4" y="450.0" width="4.6" height="1" fill="#606060"/>
<rect x="66.4" y="450.0" width="4.6" height="1" fill="#606060"/>
<rect x="71.8" y="449.9" width="3.8" height="1.2" fill="#26a69a" stroke="#5b5b5b" stroke-width="0.8"/>
<rect x="76.4" y="449.0" width="4.6" height="1" fill="#606060"/>
<rect x="81.8" y="448.2" width="3.8" height="1.2" fill="#26a69a" stroke="#5b5b5b" stroke-width="0.8"/>
<rect x="86.4" y="446.7" width="4.6" height="1" fill="#606060"/>
<rect x="91.8" y="446.2" width="3.8" height="1.2" fill="#26a69a" stroke="#5b5b5b" stroke-width="0.8"/>
<rect x="96.4" y="445.5" width="4.6" height="1" fill="#606060"/>
<rect x="101.8" y="446.0" width="3.8" height="1.2" fill="#26a69a" stroke="#5b5b5b" stroke-width="0.8"/>
<rect x="106.4" y="445.0" width="4.6" height="1" fill="#606060"/>
<rect x="111.4" y="444.0" width="4.6" height="1" fill="#606060"/>
<rect x="116.4" y="445.0" width="4.6" height="1" fill="#606060"/>
<rect x="121.4" y="445.0" width="4.6" height="1" fill="#606060"/>
<rect x="126.4" y="444.5" width="4.6" height="1" fill="#606060"/>
<rect x="131.4" y="444.0" width="4.6" height="1" fill="#606060"/>
<rect x="136.8" y="442.6" width="3.8" height="1.4" fill="#26a69a" stroke="#5b5b5b" stroke-width="0.8"/>
<rect x="141.8" y="442.6" width="3.8" height="1.4" fill="#ef5350" stroke="#5b5b5b" stroke-width="0.8"/>
<rect x="146.4" y="444.0" width="4.6" height="1" fill="#606060"/>
<rect x="151.8" y="442.6" width="3.8" height="1.4" fill="#26a69a" stroke="#5b5b5b" stroke-width="0.8"/>
<rect x="156.8" y="438.7" width="3.8" height="3.1" fill="#26a69a" stroke="#5b5b5b" stroke-width="0.8"/>
<rect x="161.8" y="437.6" width="3.8" height="1.2" fill="#26a69a" stroke="#5b5b5b" stroke-width="0.8"/>
<rect x="166.8" y="436.0" width="3.8" height="1.2" fill="#26a69a" stroke="#5b5b5b" stroke-width="0.8"/>
<rect x="171.8" y="436.0" width="3.8" height="1.2" fill="#ef5350" stroke="#5b5b5b" stroke-width="0.8"/>
<rect x="574.8" y="456.0" width="3.8" height="1.2" fill="#26a69a" stroke="#5b5b5b" stroke-width="0.8"/>
<rect x="579.4" y="454.9" width="4.6" height="1" fill="#606060"/>
<rect x="584.8" y="453.4" width="3.8" height="1.8" fill="#26a69a" stroke="#5b5b5b" stroke-width="0.8"/>
<rect x="588.8" y="448.5" width="3.8" height="4.0" fill="#26a69a" stroke="#5b5b5b" stroke-width="0.8"/>
<rect x="593.8" y="448.2" width="3.8" height="1.2" fill="#ef5350" stroke="#5b5b5b" stroke-width="0.8"/>
<rect x="599.5" y="450.6" width="1" height="1.4" fill="#7a7a7a"/>
<rect x="598.8" y="449.6" width="3.8" height="1.2" fill="#ef5350" stroke="#5b5b5b" stroke-width="0.8"/>
<rect x="603.8" y="451.0" width="3.8" height="4.7" fill="#ef5350" stroke="#5b5b5b" stroke-width="0.8"/>
<rect x="608.8" y="456.5" width="3.8" height="12.9" fill="#ef5350" stroke="#5b5b5b" stroke-width="0.8"/>
<rect x="613.8" y="470.5" width="3.8" height="1.6" fill="#ef5350" stroke="#5b5b5b" stroke-width="0.8"/>
<rect x="619.5" y="472.5" width="1" height="3.5" fill="#7a7a7a"/>
<rect x="618.4" y="472.0" width="4.6" height="1" fill="#606060"/>
<rect x="623.8" y="472.7" width="3.8" height="1.3" fill="#ef5350" stroke="#5b5b5b" stroke-width="0.8"/>
<rect x="628.8" y="467.2" width="3.8" height="6.8" fill="#26a69a" stroke="#5b5b5b" stroke-width="0.8"/>
<rect x="633.4" y="466.1" width="4.6" height="1" fill="#606060"/>
<rect x="639.5" y="462.0" width="1" height="3.2" fill="#7a7a7a"/>
<rect x="638.8" y="465.6" width="3.8" height="1.2" fill="#26a69a" stroke="#5b5b5b" stroke-width="0.8"/>
<rect x="643.4" y="464.8" width="4.6" height="1" fill="#606060"/>
<rect x="648.8" y="466.1" width="3.8" height="1.2" fill="#ef5350" stroke="#5b5b5b" stroke-width="0.8"/>
<rect x="653.4" y="466.5" width="4.6" height="1" fill="#606060"/>
<rect x="658.8" y="464.7" width="3.8" height="1.5" fill="#26a69a" stroke="#5b5b5b" stroke-width="0.8"/>
<rect x="663.8" y="461.5" width="3.8" height="2.1" fill="#26a69a" stroke="#5b5b5b" stroke-width="0.8"/>
<rect x="669.5" y="467.3" width="1" height="2.0" fill="#7a7a7a"/>
<rect x="668.8" y="461.5" width="3.8" height="5.4" fill="#ef5350" stroke="#5b5b5b" stroke-width="0.8"/>
<rect x="674.5" y="467.5" width="1" height="2.0" fill="#7a7a7a"/>
<rect x="673.4" y="467.0" width="4.6" height="1" fill="#606060"/>
<rect x="678.8" y="468.4" width="3.8" height="6.0" fill="#ef5350" stroke="#5b5b5b" stroke-width="0.8"/>
<rect x="684.5" y="474.8" width="1" height="3.7" fill="#7a7a7a"/>
<rect x="683.8" y="473.6" width="3.8" height="1.2" fill="#26a69a" stroke="#5b5b5b" stroke-width="0.8"/>
<rect x="688.4" y="473.0" width="4.6" height="1" fill="#606060"/>
<rect x="694.5" y="459.1" width="1" height="2.2" fill="#7a7a7a"/>
<rect x="693.8" y="461.7" width="3.8" height="11.6" fill="#26a69a" stroke="#5b5b5b" stroke-width="0.8"/>
<rect x="699.5" y="461.6" width="1" height="2.3" fill="#7a7a7a"/>
<rect x="698.8" y="447.6" width="3.8" height="13.6" fill="#26a69a" stroke="#5b5b5b" stroke-width="0.8"/>
<rect x="704.5" y="441.7" width="1" height="2.9" fill="#7a7a7a"/>
<rect x="703.8" y="445.0" width="3.8" height="2.0" fill="#26a69a" stroke="#5b5b5b" stroke-width="0.8"/>
<rect x="709.5" y="442.1" width="1" height="2.7" fill="#7a7a7a"/>
<rect x="708.8" y="445.2" width="3.8" height="1.2" fill="#ef5350" stroke="#5b5b5b" stroke-width="0.8"/>
<rect x="714.5" y="444.2" width="1" height="1.8" fill="#7a7a7a"/>
<rect x="713.8" y="446.4" width="3.8" height="1.2" fill="#ef5350" stroke="#5b5b5b" stroke-width="0.8"/>
<rect x="718.8" y="448.4" width="3.8" height="1.2" fill="#ef5350" stroke="#5b5b5b" stroke-width="0.8"/>
<rect x="723.8" y="450.3" width="3.8" height="1.2" fill="#ef5350" stroke="#5b5b5b" stroke-width="0.8"/>
<rect x="728.8" y="448.4" width="3.8" height="2.5" fill="#26a69a" stroke="#5b5b5b" stroke-width="0.8"/>
<rect x="733.8" y="443.0" width="3.8" height="4.6" fill="#26a69a" stroke="#5b5b5b" stroke-width="0.8"/>
<rect x="738.8" y="420.6" width="3.8" height="21.6" fill="#26a69a" stroke="#5b5b5b" stroke-width="0.8"/>
<rect x="743.8" y="419.6" width="3.8" height="1.2" fill="#26a69a" stroke="#5b5b5b" stroke-width="0.8"/>
<rect x="748.8" y="412.3" width="3.8" height="6.5" fill="#26a69a" stroke="#5b5b5b" stroke-width="0.8"/>
<rect x="753.8" y="405.3" width="3.8" height="6.2" fill="#26a69a" stroke="#5b5b5b" stroke-width="0.8"/>
<rect x="758.8" y="393.9" width="3.8" height="10.8" fill="#26a69a" stroke="#5b5b5b" stroke-width="0.8"/>
<rect x="764.5" y="393.5" width="1" height="2.5" fill="#7a7a7a"/>
<rect x="763.8" y="392.8" width="3.8" height="1.2" fill="#26a69a" stroke="#5b5b5b" stroke-width="0.8"/>
<rect x="768.8" y="392.8" width="3.8" height="2.6" fill="#ef5350" stroke="#5b5b5b" stroke-width="0.8"/>
<rect x="773.4" y="395.9" width="4.6" height="1" fill="#606060"/>
<text x="990.2" y="252.8" font-family="Liberation Sans" font-size="8.2" fill="#555" textLength="28.2" lengthAdjust="spacingAndGlyphs" text-anchor="start">1.08250</text>
<text x="990.2" y="86.5" font-family="Liberation Sans" font-size="8.2" fill="#555" textLength="28.2" lengthAdjust="spacingAndGlyphs" text-anchor="start">1.08600</text>
<text x="990.2" y="110.3" font-family="Liberation Sans" font-size="8.2" fill="#555" textLength="28.2" lengthAdjust="spacingAndGlyphs" text-anchor="start">1.08550</text>
<text x="990.2" y="134.3" font-family="Liberation Sans" font-size="8.2" fill="#555" textLength="28.2" lengthAdjust="spacingAndGlyphs" text-anchor="start">1.08500</text>
<text x="990.2" y="158.2" font-family="Liberation Sans" font-size="8.2" fill="#555" textLength="28.2" lengthAdjust="spacingAndGlyphs" text-anchor="start">1.08450</text>
<text x="990.2" y="181.6" font-family="Liberation Sans" font-size="8.2" fill="#555" textLength="28.2" lengthAdjust="spacingAndGlyphs" text-anchor="start">1.08400</text>
<text x="990.2" y="205.4" font-family="Liberation Sans" font-size="8.2" fill="#555" textLength="28.2" lengthAdjust="spacingAndGlyphs" text-anchor="start">1.08350</text>
<text x="990.2" y="229.0" font-family="Liberation Sans" font-size="8.2" fill="#555" textLength="28.2" lengthAdjust="spacingAndGlyphs" text-anchor="start">1.08300</text>
<text x="990.2" y="276.5" font-family="Liberation Sans" font-size="8.2" fill="#555" textLength="28.2" lengthAdjust="spacingAndGlyphs" text-anchor="start">1.08200</text>
<text x="990.2" y="300.3" font-family="Liberation Sans" font-size="8.2" fill="#555" textLength="28.2" lengthAdjust="spacingAndGlyphs" text-anchor="start">1.08150</text>
<text x="990.2" y="323.6" font-family="Liberation Sans" font-size="8.2" fill="#555" textLength="28.2" lengthAdjust="spacingAndGlyphs" text-anchor="start">1.08100</text>
<path d="M985.6 252 L990.3 247.8 L1022.2 247.8 L1022.2 256.8 L990.3 256.8 Z" fill="#050505"/>
<text x="990.9" y="255.0" font-family="Liberation Sans" font-size="8.2" fill="#d6d6c0" textLength="27.7" lengthAdjust="spacingAndGlyphs" text-anchor="start">1.08245</text>
<text x="989.6" y="342.2" font-family="Liberation Sans" font-size="8.2" fill="#444" textLength="16.9" lengthAdjust="spacingAndGlyphs" text-anchor="start">4801</text>
<text x="990.0" y="440.3" font-family="Liberation Sans" font-size="8.2" fill="#444" textLength="4.3" lengthAdjust="spacingAndGlyphs" text-anchor="start">0</text>
<text x="989.2" y="482.8" font-family="Liberation Sans" font-size="8.2" fill="#444" textLength="21.4" lengthAdjust="spacingAndGlyphs" text-anchor="start">-1986</text>
<path d="M985.8 397.1 L990.2 392.8 L1011.6 392.8 L1011.6 401.7 L990.2 401.7 Z" fill="#ee5054"/>
<text x="990.2" y="399.8" font-family="Liberation Sans" font-size="8.2" fill="#fff" textLength="17" lengthAdjust="spacingAndGlyphs" text-anchor="start">1939</text>
<defs><clipPath id="cl"><rect x="2" y="60" width="1025" height="450"/></clipPath></defs><g clip-path="url(#cl)">
<text x="2.0" y="492.7" font-family="Liberation Sans" font-size="9.5" fill="#2a2a2a" textLength="18.9" lengthAdjust="spacingAndGlyphs" text-anchor="start">22:00</text>
<text x="46.7" y="492.7" font-family="Liberation Sans" font-size="9.5" fill="#2a2a2a" textLength="18.9" lengthAdjust="spacingAndGlyphs" text-anchor="start">22:45</text>
<text x="91.5" y="492.7" font-family="Liberation Sans" font-size="9.5" fill="#2a2a2a" textLength="18.9" lengthAdjust="spacingAndGlyphs" text-anchor="start">23:30</text>
<text x="136.3" y="492.7" font-family="Liberation Sans" font-size="9.5" fill="#2a2a2a" textLength="18.9" lengthAdjust="spacingAndGlyphs" text-anchor="start">00:15</text>
<text x="181.1" y="492.7" font-family="Liberation Sans" font-size="9.5" fill="#2a2a2a" textLength="18.9" lengthAdjust="spacingAndGlyphs" text-anchor="start">01:00</text>
<text x="225.8" y="492.7" font-family="Liberation Sans" font-size="9.5" fill="#2a2a2a" textLength="18.9" lengthAdjust="spacingAndGlyphs" text-anchor="start">01:45</text>
<text x="270.6" y="492.7" font-family="Liberation Sans" font-size="9.5" fill="#2a2a2a" textLength="18.9" lengthAdjust="spacingAndGlyphs" text-anchor="start">02:30</text>
<text x="315.4" y="492.7" font-family="Liberation Sans" font-size="9.5" fill="#2a2a2a" textLength="18.9" lengthAdjust="spacingAndGlyphs" text-anchor="start">03:15</text>
<text x="360.1" y="492.7" font-family="Liberation Sans" font-size="9.5" fill="#2a2a2a" textLength="18.9" lengthAdjust="spacingAndGlyphs" text-anchor="start">04:00</text>
<text x="404.9" y="492.7" font-family="Liberation Sans" font-size="9.5" fill="#2a2a2a" textLength="18.9" lengthAdjust="spacingAndGlyphs" text-anchor="start">04:45</text>
<text x="449.7" y="492.7" font-family="Liberation Sans" font-size="9.5" fill="#2a2a2a" textLength="18.9" lengthAdjust="spacingAndGlyphs" text-anchor="start">05:30</text>
<text x="494.5" y="492.7" font-family="Liberation Sans" font-size="9.5" fill="#2a2a2a" textLength="18.9" lengthAdjust="spacingAndGlyphs" text-anchor="start">06:15</text>
<text x="539.2" y="492.7" font-family="Liberation Sans" font-size="9.5" fill="#2a2a2a" textLength="18.9" lengthAdjust="spacingAndGlyphs" text-anchor="start">07:00</text>
<text x="584.0" y="492.7" font-family="Liberation Sans" font-size="9.5" fill="#2a2a2a" textLength="18.9" lengthAdjust="spacingAndGlyphs" text-anchor="start">07:45</text>
<text x="628.8" y="492.7" font-family="Liberation Sans" font-size="9.5" fill="#2a2a2a" textLength="18.9" lengthAdjust="spacingAndGlyphs" text-anchor="start">08:30</text>
<text x="673.6" y="492.7" font-family="Liberation Sans" font-size="9.5" fill="#2a2a2a" textLength="18.9" lengthAdjust="spacingAndGlyphs" text-anchor="start">09:15</text>
<text x="718.3" y="492.7" font-family="Liberation Sans" font-size="9.5" fill="#2a2a2a" textLength="18.9" lengthAdjust="spacingAndGlyphs" text-anchor="start">10:00</text>
<text x="763.1" y="492.7" font-family="Liberation Sans" font-size="9.5" fill="#2a2a2a" textLength="18.9" lengthAdjust="spacingAndGlyphs" text-anchor="start">10:45</text>
</g>
<text x="6.0" y="345.2" font-family="Liberation Sans" font-size="8.3" fill="#444" textLength="158.1" lengthAdjust="spacingAndGlyphs" text-anchor="start">CVD - Cumulative Volume Delta(Bars, True)</text>
</svg>
<svg style="left:3px;top:68.8px" width="8" height="6" viewBox="0 0 8 6"><rect x="0" y="0.6" width="3.3" height="2.6" fill="#26a69a"/><path d="M0.3 3 V5.2" stroke="#a09090" stroke-width="0.6"/><path d="M5.0 1 L7.4 3.2 L5.0 5.4 Z" fill="#777"/></svg>
<svg style="left:961.5px;top:66.3px" width="10.7" height="9.2" viewBox="0 0 10.7 9.2"><rect x="0.6" y="0.6" width="9.6" height="8.4" fill="#fff" stroke="#333" stroke-width="1.1"/><path d="M2.6 1.9 V7.7 L6.6 4.8 Z" fill="#111"/><rect x="6.6" y="1.9" width="1.7" height="5.8" fill="#111"/></svg>
<svg style="left:1018px;top:65px" width="7" height="7" viewBox="0 0 7 7"><rect x="0.5" y="0.5" width="6" height="6" fill="#fff" stroke="#555" stroke-width="0.9"/></svg>
<div class="t" style="left:1019.60px;top:66px;font-size:7.00px;color:#444;transform:scaleX(0.8500);transform-origin:left top;">S</div>
<div class="a" style="left:174px;top:84px;width:402px;height:402px;background:#eeeef2;border:1px solid #7cb2e2"></div>
<svg style="left:176.95px;top:87.5px" width="13.95" height="11.957142857142856" viewBox="0 0 14 12"><path d="M3.4 0.75 L10.6 0.75 L13.25 6 L10.6 11.25 L3.4 11.25 L0.75 6 Z" fill="#fff" stroke="#111" stroke-width="1.5" stroke-linejoin="round"/><path d="M0.9 6 L2.7 2.6 L6.8 3.5 L3.3 8.3 L2.6 8.9 Z" fill="#111"/><path d="M8.8 4.9 L10.6 8.0 L6.9 8.0 Z" fill="#111"/></svg>
<div class="t" style="left:330.80px;top:89px;font-size:8.50px;color:#222;font-weight:bold;transform:scaleX(0.9156);transform-origin:left top;">Indicators</div>
<div class="a" style="left:516px;top:92.3px;width:7px;height:2px;background:#222;"></div>
<svg style="left:538px;top:90px" width="7" height="7" viewBox="0 0 7 7"><rect x="0.55" y="0.55" width="5.9" height="5.9" fill="none" stroke="#333" stroke-width="1.1"/><rect x="0" y="0" width="7" height="1.8" fill="#222"/></svg>
<svg style="left:561px;top:90.5px" width="6.5" height="5.6" viewBox="0 0 6.5 5.6"><path d="M0.4 0.3 L6.1 5.3 M6.1 0.3 L0.4 5.3" stroke="#222" stroke-width="1.2"/></svg>
<div class="a" style="left:177.5px;top:102.5px;width:195px;height:346px;background:#eeeef2;border:1px solid #e2e2ea"></div>
<div class="a" style="left:178.7px;top:103.6px;width:192.6px;height:14.2px;background:#f4f4f7;border:1px solid #dcdce4"></div>
<div class="t" style="left:186.60px;top:107px;font-size:8.50px;color:#333;transform:scaleX(0.9400);transform-origin:left top;">Available indicators</div>
<svg style="left:362px;top:109.2px" width="5" height="2.4" viewBox="0 0 5 2.4"><path d="M0 2.4H5L2.5 0Z" fill="#111"/></svg>
<div class="a" style="left:178.7px;top:120.2px;width:192px;height:14.3px;background:#fff;border:1px solid #dcdce4"></div>
<div class="t" style="left:182.30px;top:124px;font-size:8.90px;color:#a8a8b0;transform:scaleX(0.8404);transform-origin:left top;">Search</div>
<div class="a" style="left:179.4px;top:137.9px;width:191.6px;height:163.3px;background:#fff;border-top:1px solid #e4e4ec"></div>
<div class="a" style="left:193px;top:138.4px;width:167.5px;height:13.3px;background:#cce2f6;"></div>
<svg style="left:184.2px;top:142.79999999999998px" width="4.4" height="4" viewBox="0 0 4.4 4"><path d="M4.4 0 V4 H0 Z" fill="#222"/></svg>
<div class="t" style="left:195.20px;top:142px;font-size:8.30px;color:#333;transform:scaleX(0.9550);transform-origin:left top;">1. Custom Indicators</div>
<div class="t" style="left:208.50px;top:155px;font-size:8.30px;color:#333;transform:scaleX(0.9550);transform-origin:left top;">Footprint Patterns</div>
<svg style="left:184.2px;top:169.55999999999997px" width="4.4" height="4" viewBox="0 0 4.4 4"><path d="M4.4 0 V4 H0 Z" fill="#222"/></svg>
<div class="t" style="left:195.20px;top:168px;font-size:8.30px;color:#333;transform:scaleX(0.9550);transform-origin:left top;">Bid x Ask,Delta,Volume</div>
<div class="t" style="left:208.50px;top:182px;font-size:8.30px;color:#333;transform:scaleX(0.9550);transform-origin:left top;">Bar's Volume Filter</div>
<div class="t" style="left:208.50px;top:195px;font-size:8.30px;color:#333;transform:scaleX(0.9550);transform-origin:left top;">Bid Ask</div>
<div class="t" style="left:208.50px;top:209px;font-size:8.30px;color:#333;transform:scaleX(0.9550);transform-origin:left top;">Cumulative Daily Volume</div>
<div class="t" style="left:208.50px;top:222px;font-size:8.30px;color:#333;transform:scaleX(0.9550);transform-origin:left top;">CVD - Cumulative Volume Delta</div>
<div class="t" style="left:208.50px;top:235px;font-size:8.30px;color:#333;transform:scaleX(0.9550);transform-origin:left top;">Delta</div>
<div class="t" style="left:208.50px;top:249px;font-size:8.30px;color:#333;transform:scaleX(0.9550);transform-origin:left top;">Volume</div>
<div class="t" style="left:208.50px;top:262px;font-size:8.30px;color:#333;transform:scaleX(0.9550);transform-origin:left top;">Volume On The Chart</div>
<svg style="left:184.2px;top:276.59999999999997px" width="4.4" height="4" viewBox="0 0 4.4 4"><path d="M4.4 0 V4 H0 Z" fill="#222"/></svg>
<div class="t" style="left:195.20px;top:275px;font-size:8.30px;color:#333;transform:scaleX(0.9550);transform-origin:left top;">Clusters, Profiles, Levels</div>
<div class="t" style="left:208.50px;top:289px;font-size:8.30px;color:#333;transform:scaleX(0.9550);transform-origin:left top;">Cluster Search</div>
<div class="a" style="left:360.5px;top:138px;width:10px;height:163px;background:#f8f8fa;"></div>
<svg style="left:363.9px;top:142.2px" width="5" height="2.8" viewBox="0 0 5 2.8"><path d="M0 2.8H5L2.5 0Z" fill="#111"/></svg>
<div class="a" style="left:363px;top:149.9px;width:6.6px;height:6.1px;background:#c8cad8;"></div>
<svg style="left:364.3px;top:295.6px" width="4.6" height="2.2" viewBox="0 0 4.6 2.2"><path d="M0 0H4.6L2.3 2.2Z" fill="#111"/></svg>
<div class="a" style="left:270.8px;top:302.6px;width:9.2px;height:1.4px;background:#8a8a94;"></div>
<div class="a" style="left:178.8px;top:304.8px;width:192.4px;height:13.4px;background:#f4f4f7;border:1px solid #dcdce4"></div>
<div class="t" style="left:186.50px;top:309px;font-size:8.30px;color:#333;transform:scaleX(0.9550);transform-origin:left top;">Selected indicators</div>
<div class="a" style="left:179.4px;top:318.2px;width:191.6px;height:99.8px;background:#fff;"></div>
<div class="a" style="left:180px;top:320.7px;width:190px;height:14.3px;background:#0a78d4;"></div>
<div class="t" style="left:183.80px;top:325px;font-size:8.50px;color:#fff;transform:scaleX(0.9155);transform-origin:left top;">CVD - Cumulative Volume Delta(Bars, True)</div>
<svg style="left:359.6px;top:326px" width="7" height="4.4" viewBox="0 0 7 4.4"><ellipse cx="3.5" cy="2.2" rx="3.3" ry="2" fill="#222"/><circle cx="3.5" cy="2.2" r="0.9" fill="#0a78d4"/></svg>
<div class="a" style="left:178.9px;top:418px;width:96.4px;height:15px;background:#efeff3;border:1px solid #dcdce4"></div>
<div class="a" style="left:275.3px;top:418px;width:96px;height:15px;background:#efeff3;border:1px solid #dcdce4"></div>
<div class="a" style="left:178.9px;top:432.7px;width:96.4px;height:15px;background:#efeff3;border:1px solid #dcdce4"></div>
<div class="a" style="left:275.3px;top:432.7px;width:96px;height:15px;background:#f5f5f8;border:1px solid #dcdce4"></div>
<div class="t" style="left:227.00px;top:422px;font-size:8.30px;color:#b0b0b8;transform:translateX(-50%) scaleX(0.9550);transform-origin:center top;">Up</div>
<div class="t" style="left:323.00px;top:422px;font-size:8.30px;color:#b0b0b8;transform:translateX(-50%) scaleX(0.9550);transform-origin:center top;">Add</div>
<div class="t" style="left:227.00px;top:437px;font-size:8.30px;color:#b0b0b8;transform:translateX(-50%) scaleX(0.9550);transform-origin:center top;">Down</div>
<div class="t" style="left:323.00px;top:437px;font-size:8.30px;color:#333;transform:translateX(-50%) scaleX(0.9550);transform-origin:center top;">Delete</div>
<div class="a" style="left:374.5px;top:102.5px;width:198px;height:346px;background:#eeeef2;border:1px solid #e2e2ea"></div>
<div class="a" style="left:375.1px;top:103.4px;width:196.3px;height:14.4px;background:#f4f4f7;border:1px solid #dcdce4"></div>
<div class="t" style="left:382.80px;top:107px;font-size:8.50px;color:#333;transform:scaleX(0.9569);transform-origin:left top;">Indicator settings</div>
<div class="a" style="left:377.8px;top:120.2px;width:190.8px;height:14.3px;background:#fff;border:1px solid #dcdce4"></div>
<div class="t" style="left:380.80px;top:124px;font-size:8.90px;color:#a8a8b0;transform:scaleX(0.8404);transform-origin:left top;">Search</div>
<div class="a" style="left:375.6px;top:137.3px;width:183.69999999999993px;height:264.2px;background:#fff;"></div>
<div class="a" style="left:375.6px;top:137.2px;width:183.69999999999993px;height:14.200000000000017px;background:#d3d3d6;"></div>
<svg style="left:381.3px;top:143.2px" width="4.2" height="3.9" viewBox="0 0 4.2 3.9"><path d="M4.2 0 V3.9 H0 Z" fill="#222"/></svg>
<div class="t" style="left:390.50px;top:141px;font-size:8.30px;color:#1a1a1a;font-weight:bold;">Settings</div>
<div class="a" style="left:375.6px;top:165.7px;width:183.69999999999993px;height:1px;background:#e2e2ec;"></div>
<div class="a" style="left:466.5px;top:151.4px;width:1px;height:14.799999999999983px;background:#e2e2ec;"></div>
<div class="t" style="left:390.50px;top:156px;font-size:8.90px;color:#333;transform:scaleX(0.9700);transform-origin:left top;">Visual Mode</div>
<div class="t" style="left:470.80px;top:156px;font-size:8.90px;color:#333;transform:scaleX(0.9500);transform-origin:left top;">Candles</div>
<div class="a" style="left:375.6px;top:180.5px;width:183.69999999999993px;height:1px;background:#e2e2ec;"></div>
<div class="a" style="left:466.5px;top:166.2px;width:1px;height:14.800000000000011px;background:#e2e2ec;"></div>
<div class="t" style="left:390.50px;top:171px;font-size:8.90px;color:#333;transform:scaleX(0.9700);transform-origin:left top;">Session delta mode</div>
<div class="t" style="left:470.80px;top:171px;font-size:8.90px;color:#333;transform:scaleX(0.9500);transform-origin:left top;">Default</div>
<div class="a" style="left:375.6px;top:196.1px;width:183.69999999999993px;height:1px;background:#e2e2ec;"></div>
<div class="a" style="left:466.5px;top:181.0px;width:1px;height:15.599999999999994px;background:#e2e2ec;"></div>
<div class="t" style="left:390.50px;top:185px;font-size:8.90px;color:#333;transform:scaleX(0.9700);transform-origin:left top;">Custom session st...</div>
<div class="t" style="left:470.80px;top:185px;font-size:8.90px;color:#333;transform:scaleX(0.9500);transform-origin:left top;">00:00:00</div>
<div class="a" style="left:375.6px;top:211.5px;width:183.69999999999993px;height:1px;background:#e2e2ec;"></div>
<div class="a" style="left:466.5px;top:196.6px;width:1px;height:15.400000000000006px;background:#e2e2ec;"></div>
<div class="t" style="left:390.50px;top:201px;font-size:8.90px;color:#333;transform:scaleX(0.9700);transform-origin:left top;">Use scale</div>
<div class="a" style="left:467.8px;top:200.2px;width:9.6px;height:8.4px;background:#fff;border:1px solid #d4d4de"></div>
<div class="a" style="left:375.6px;top:212.0px;width:183.69999999999993px;height:13.599999999999994px;background:#d3d3d6;"></div>
<svg style="left:381.3px;top:218.0px" width="4.2" height="3.9" viewBox="0 0 4.2 3.9"><path d="M4.2 0 V3.9 H0 Z" fill="#222"/></svg>
<div class="t" style="left:390.50px;top:216px;font-size:8.30px;color:#1a1a1a;font-weight:bold;">Alerts</div>
<div class="a" style="left:375.6px;top:241.1px;width:183.69999999999993px;height:1px;background:#e2e2ec;"></div>
<div class="a" style="left:466.5px;top:225.6px;width:1px;height:16.0px;background:#e2e2ec;"></div>
<div class="t" style="left:390.50px;top:230px;font-size:8.90px;color:#333;transform:scaleX(0.9700);transform-origin:left top;">Use alerts</div>
<div class="a" style="left:467.8px;top:229.2px;width:9.6px;height:8.4px;background:#fff;border:1px solid #d4d4de"></div>
<div class="a" style="left:375.6px;top:256.8px;width:183.69999999999993px;height:1px;background:#e2e2ec;"></div>
<div class="a" style="left:466.5px;top:241.6px;width:1px;height:15.700000000000017px;background:#e2e2ec;"></div>
<div class="t" style="left:390.50px;top:246px;font-size:8.90px;color:#333;transform:scaleX(0.9700);transform-origin:left top;">Alert File</div>
<div class="t" style="left:470.80px;top:246px;font-size:8.90px;color:#333;transform:scaleX(0.9500);transform-origin:left top;">alert1</div>
<div class="a" style="left:375.6px;top:271.8px;width:183.69999999999993px;height:1px;background:#e2e2ec;"></div>
<div class="a" style="left:466.5px;top:257.3px;width:1px;height:15.0px;background:#e2e2ec;"></div>
<div class="t" style="left:390.50px;top:262px;font-size:8.90px;color:#333;transform:scaleX(0.9700);transform-origin:left top;">Required Change</div>
<div class="t" style="left:470.80px;top:262px;font-size:8.90px;color:#333;transform:scaleX(0.9500);transform-origin:left top;">0.</div>
<div class="a" style="left:375.6px;top:285.5px;width:183.69999999999993px;height:1px;background:#e2e2ec;"></div>
<div class="a" style="left:466.5px;top:272.3px;width:1px;height:13.699999999999989px;background:#e2e2ec;"></div>
<div class="t" style="left:390.50px;top:277px;font-size:8.90px;color:#333;transform:scaleX(0.9700);transform-origin:left top;">Font Color</div>
<div class="a" style="left:470.3px;top:275.3px;width:8.4px;height:8.6px;background:#f7f9f9;border:1px solid #d8d8d8"></div>
<div class="t" style="left:481.60px;top:276px;font-size:8.50px;color:#333;transform:scaleX(0.8958);transform-origin:left top;">#FFF7F9F9</div>
<div class="a" style="left:375.6px;top:299.6px;width:183.69999999999993px;height:1px;background:#e2e2ec;"></div>
<div class="a" style="left:466.5px;top:286.0px;width:1px;height:14.100000000000023px;background:#e2e2ec;"></div>
<div class="t" style="left:390.50px;top:291px;font-size:8.90px;color:#333;transform:scaleX(0.9700);transform-origin:left top;">Background</div>
<div class="a" style="left:470.3px;top:289.6px;width:8.4px;height:8px;background:#4b4848;"></div>
<div class="t" style="left:481.40px;top:290px;font-size:8.50px;color:#333;transform:scaleX(0.9386);transform-origin:left top;">#FF4B4848</div>
<div class="a" style="left:375.6px;top:300.1px;width:183.69999999999993px;height:14.599999999999966px;background:#d3d3d6;"></div>
<svg style="left:381.3px;top:306.1px" width="4.2" height="3.9" viewBox="0 0 4.2 3.9"><path d="M4.2 0 V3.9 H0 Z" fill="#222"/></svg>
<div class="t" style="left:390.50px;top:304px;font-size:8.30px;color:#1a1a1a;font-weight:bold;">Misc</div>
<div class="a" style="left:375.6px;top:329.5px;width:183.69999999999993px;height:1px;background:#e2e2ec;"></div>
<div class="a" style="left:466.5px;top:314.7px;width:1px;height:15.300000000000011px;background:#e2e2ec;"></div>
<div class="t" style="left:390.50px;top:319px;font-size:8.90px;color:#333;transform:scaleX(0.9700);transform-origin:left top;">Show description</div>
<div class="a" style="left:467.8px;top:318.0px;width:9.6px;height:8.7px;background:#fff;border:1px solid #d4d4de"></div>
<svg style="left:469.5px;top:319.7px" width="6" height="5" viewBox="0 0 6 5"><path d="M0.5 2.6 L2.3 4.3 L5.5 0.6" fill="none" stroke="#222" stroke-width="1.2"/></svg>
<div class="a" style="left:375.6px;top:330.0px;width:183.69999999999993px;height:14.300000000000011px;background:#d3d3d6;"></div>
<svg style="left:381.3px;top:336.0px" width="4.2" height="3.9" viewBox="0 0 4.2 3.9"><path d="M4.2 0 V3.9 H0 Z" fill="#222"/></svg>
<div class="t" style="left:390.50px;top:334px;font-size:8.30px;color:#1a1a1a;font-weight:bold;">Drawing</div>
<div class="a" style="left:375.6px;top:359.0px;width:183.69999999999993px;height:1px;background:#e2e2ec;"></div>
<div class="a" style="left:466.5px;top:344.3px;width:1px;height:15.199999999999989px;background:#e2e2ec;"></div>
<div class="t" style="left:390.50px;top:349px;font-size:8.90px;color:#333;transform:scaleX(0.9700);transform-origin:left top;">Panel</div>
<div class="t" style="left:470.80px;top:348px;font-size:8.50px;color:#333;">1</div>
<svg style="left:551.7px;top:351.5px" width="5.1" height="2.2" viewBox="0 0 5.1 2.2"><path d="M0 0H5.1L2.55 2.2Z" fill="#111"/></svg>
<div class="a" style="left:375.6px;top:376.2px;width:183.69999999999993px;height:1px;background:#e2e2ec;"></div>
<div class="a" style="left:466.5px;top:359.5px;width:1px;height:17.19999999999999px;background:#e2e2ec;"></div>
<div class="t" style="left:390.50px;top:365px;font-size:8.90px;color:#333;transform:scaleX(0.9700);transform-origin:left top;">Line</div>
<svg style="left:381.7px;top:365.8px" width="2.6" height="5" viewBox="0 0 2.6 5"><path d="M0 0 V5 L2.6 2.5 Z" fill="#222"/></svg>
<div class="a" style="left:470px;top:362.5px;width:15.1px;height:10.9px;background:#fff;border:1px solid #d8d8e0"></div>
<div class="t" style="left:487.50px;top:365px;font-size:8.50px;color:#333;transform:scaleX(0.9943);transform-origin:left top;">Hide;Solid;1px</div>
<div class="a" style="left:375.6px;top:391.9px;width:183.69999999999993px;height:1px;background:#e2e2ec;"></div>
<div class="a" style="left:466.5px;top:376.7px;width:1px;height:15.699999999999989px;background:#e2e2ec;"></div>
<div class="t" style="left:390.50px;top:381px;font-size:8.90px;color:#333;transform:scaleX(0.9700);transform-origin:left top;">Candles</div>
<svg style="left:381.7px;top:382.3px" width="2.6" height="5" viewBox="0 0 2.6 5"><path d="M0 0 V5 L2.6 2.5 Z" fill="#222"/></svg>
<div class="a" style="left:470px;top:378.4px;width:15.1px;height:11.2px;background:#fff;border:1px solid #d8d8e0"></div>
<svg style="left:472px;top:379.7px" width="11" height="9" viewBox="0 0 11 9"><path d="M3 0 V9 M8 0 V9" stroke="#888" stroke-width="0.8"/><rect x="1.6" y="2.2" width="2.8" height="4.4" fill="#ef5350" stroke="#555" stroke-width="0.5"/><rect x="6.6" y="3.2" width="2.8" height="4" fill="#26a69a" stroke="#555" stroke-width="0.5"/></svg>
<div class="t" style="left:487.50px;top:381px;font-size:8.50px;color:#333;">Candles</div>
<div class="a" style="left:375.6px;top:406.5px;width:183.69999999999993px;height:1px;background:#e2e2ec;"></div>
<div class="a" style="left:466.5px;top:392.4px;width:1px;height:9.100000000000023px;background:#e2e2ec;"></div>
<div class="t" style="left:390.50px;top:397px;font-size:8.90px;color:#333;transform:scaleX(0.9700);transform-origin:left top;">Positive</div>
<div class="a" style="left:470.3px;top:395.4px;width:8.4px;height:8px;background:#26a69a;"></div>
<div class="t" style="left:481.40px;top:396px;font-size:8.50px;color:#333;transform:scaleX(0.9588);transform-origin:left top;">#FF26A69A</div>
<svg style="left:551.7px;top:398.29999999999995px" width="5.1" height="2.4" viewBox="0 0 5.1 2.4"><path d="M0 0H5.1L2.55 2.4Z" fill="#111"/></svg>
<div class="a" style="left:375.6px;top:402px;width:196px;height:31.4px;background:#eeeef2;"></div>
<div class="a" style="left:559.3px;top:137.3px;width:11.4px;height:265px;background:#f0f0f4;"></div>
<svg style="left:562.8px;top:142px" width="5.4" height="2.4" viewBox="0 0 5.4 2.4"><path d="M0 2.4H5.4L2.7 0Z" fill="#111"/></svg>
<div class="a" style="left:562px;top:148.9px;width:7px;height:203.9px;background:#c8cad8;"></div>
<svg style="left:562.8px;top:395.6px" width="5.2" height="2.6" viewBox="0 0 5.2 2.6"><path d="M0 0H5.2L2.6 2.6Z" fill="#111"/></svg>
<div class="a" style="left:375.6px;top:433.4px;width:196px;height:14.1px;background:#eeeef2;border-top:1px solid #dcdce4;border-bottom:1px solid #dcdce4"></div>
<div class="t" style="left:390.80px;top:437px;font-size:8.50px;color:#333;transform:scaleX(0.9506);transform-origin:left top;">Description of</div>
<div class="t" style="left:443.10px;top:437px;font-size:8.50px;color:#1a6fd8;transform:scaleX(0.9310);transform-origin:left top;text-decoration:underline">CVD - Cumulative Volume Delta</div>
<div class="a" style="left:457.2px;top:456.8px;width:49.2px;height:16.2px;background:#0a78d4;border-radius:2px"></div>
<div class="t" style="left:482.00px;top:461px;font-size:8.50px;color:#fff;transform:translateX(-50%) scaleX(0.8384);transform-origin:center top;">OK</div>
<div class="a" style="left:511.6px;top:456.9px;width:49.4px;height:16.2px;background:#f6f6f9;border:1px solid #d8d8e2;border-radius:2px"></div>
<div class="t" style="left:536.30px;top:461px;font-size:8.50px;color:#333;transform:translateX(-50%) scaleX(0.8840);transform-origin:center top;">Cancel</div>
<div class="a" style="left:1px;top:513px;width:1028px;height:16px;background:#f0f0f4;border-left:1px solid #62a6de;border-right:1px solid #62a6de;border-bottom:1px solid #a8cae8"></div>
<div class="t" style="left:5.90px;top:517px;font-size:8.50px;color:#333;transform:scaleX(0.9200);transform-origin:left top;">Orders</div>
<div class="t" style="left:38.50px;top:517px;font-size:8.50px;color:#333;transform:scaleX(0.8451);transform-origin:left top;">Trades</div>
<div class="t" style="left:69.00px;top:517px;font-size:8.50px;color:#333;transform:scaleX(0.9377);transform-origin:left top;">Positions - Active</div>
<div class="t" style="left:138.20px;top:517px;font-size:8.50px;color:#333;transform:scaleX(0.9208);transform-origin:left top;">Accounts</div>
<div class="t" style="left:178.60px;top:517px;font-size:8.50px;color:#333;transform:scaleX(0.9173);transform-origin:left top;">Statistics</div>
<div class="t" style="left:218.50px;top:517px;font-size:8.50px;color:#333;transform:scaleX(0.9259);transform-origin:left top;">Trading strategies</div>
<div class="t" style="left:341.00px;top:517px;font-size:8.50px;color:#333;transform:scaleX(0.9454);transform-origin:left top;">Following Manager</div>
<div class="a" style="left:286.2px;top:513px;width:50.2px;height:15px;background:#0a78d4;"></div>
<div class="t" style="left:290.50px;top:517px;font-size:8.50px;color:#fff;transform:scaleX(0.9229);transform-origin:left top;">6E M5 chart</div>
<div class="a" style="left:413.3px;top:513px;width:27.2px;height:15px;background:#f6f6f9;border-left:1px solid #dcdce6;border-right:1px solid #dcdce6"></div>
<div class="a" style="left:421.5px;top:520.9px;width:10.8px;height:1.2px;background:#333;"></div>
<div class="a" style="left:426.3px;top:515.8px;width:1.2px;height:11px;background:#333;"></div>
<div class="t" style="left:2.80px;top:535px;font-size:8.50px;color:#3c963c;transform:scaleX(0.9144);transform-origin:left top;">E2 - server connected.</div>
<svg style="left:85.2px;top:538px" width="5" height="2.8" viewBox="0 0 5 2.8"><path d="M0 0H5L2.5 2.8Z" fill="#111"/></svg>
<div class="t" style="left:95.00px;top:535px;font-size:8.50px;color:#e04848;transform:scaleX(0.9124);transform-origin:left top;">Feed Source: Offline</div>
<svg style="left:1021px;top:539px" width="7" height="7" viewBox="0 0 7 7"><path d="M6 1 V6 H1 Z" fill="none"/><circle cx="6" cy="2" r="0.6" fill="#999"/><circle cx="6" cy="4" r="0.6" fill="#999"/><circle cx="4" cy="4" r="0.6" fill="#999"/><circle cx="6" cy="6" r="0.6" fill="#999"/><circle cx="4" cy="6" r="0.6" fill="#999"/><circle cx="2" cy="6" r="0.6" fill="#999"/></svg>
</body></html>
